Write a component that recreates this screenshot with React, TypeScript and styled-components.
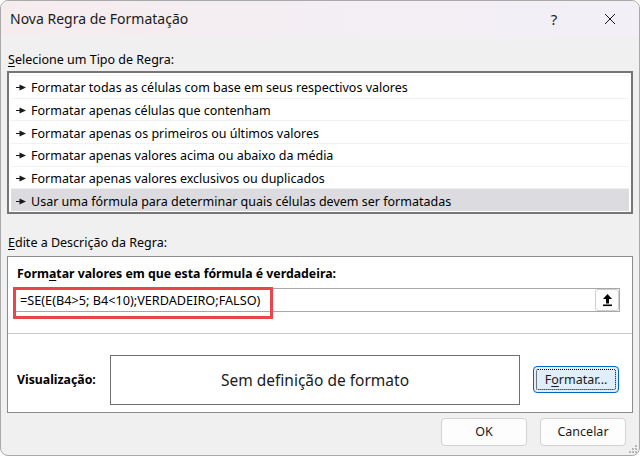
import React from 'react';
import styled, { createGlobalStyle } from 'styled-components';

const GlobalStyle = createGlobalStyle`
  html, body {
    margin: 0;
    padding: 0;
    background: #ffffff;
  }

  body {
    font-family: 'Noto Sans', 'Open Sans', sans-serif;
    font-size: 12.5px;
    color: #000;
  }
`;

const Dialog = styled.div`
  position: relative;
  box-sizing: border-box;
  width: 640px;
  height: 456px;
  display: flex;
  flex-direction: column;
  background: #f0f0f0;
  border: 1px solid #a9a9a9;
  border-radius: 8px;
  overflow: hidden;
`;

const TitleBar = styled.div`
  height: 35px;
  display: flex;
  align-items: center;
  padding-left: 9px;
  background: linear-gradient(90deg, #f5ecee 0%, #f3eef3 50%, #f2eff7 100%);
`;

const Title = styled.div`
  flex: 1;
  font-size: 14px;
  color: #1a1a1a;
  padding-bottom: 1px;
`;

const Controls = styled.div`
  display: flex;
  height: 100%;
  margin-right: 1px;
`;

const ControlButton = styled.div`
  width: 56px;
  height: 100%;
  display: flex;
  align-items: center;
  justify-content: center;
  font-size: 15px;
  color: #1a1a1a;
`;

const Body = styled.div`
  flex: 1;
  display: flex;
  flex-direction: column;
  padding: 0 6px;
`;

const Label = styled.div<{ $top: number }>`
  height: 18px;
  line-height: 18px;
  margin-top: ${(p) => p.$top}px;
  padding-left: 1px;
`;

const Key = styled.span`
  text-decoration: underline;
  text-underline-offset: 2px;
`;

const RuleList = styled.div`
  margin-top: 2px;
  border: 2px solid #767676;
  background: #ffffff;
  padding: 2px 2px 1px;
`;

const RuleRow = styled.div<{ $selected?: boolean }>`
  box-sizing: border-box;
  height: 22.66px;
  display: flex;
  align-items: center;
  padding: 2px 0 0 5px;
  gap: 5px;
  white-space: nowrap;
  background: ${(p) => (p.$selected ? '#dcdce0' : '#ffffff')};
  border-top: 1px solid ${(p) => (p.$selected ? '#eeeeee' : '#f2f2f2')};
`;

const DescBox = styled.div`
  margin-top: 4px;
  height: 157px;
  box-sizing: border-box;
  border: 1px solid #8c8c8c;
  background: #ffffff;
  display: flex;
  flex-direction: column;
`;

const DescHeader = styled.div`
  height: 18px;
  line-height: 18px;
  margin: 8px 0 0 9px;
  font-weight: 700;
  font-size: 12.3px;
`;

const FormulaRow = styled.div`
  position: relative;
  margin: 5px 12px 0 7px;
  height: 24px;
  box-sizing: border-box;
  border: 1px solid #a7a7a7;
  display: flex;
  align-items: center;
  padding-left: 4px;
`;

const FormulaText = styled.div`
  flex: 1;
  font-size: 12.7px;
  padding-top: 1px;
  white-space: nowrap;
`;

const CollapseButton = styled.div`
  width: 24px;
  height: 22px;
  box-sizing: border-box;
  border: 1px solid #cfcfcf;
  border-radius: 3px;
  background: #fdfdfd;
  display: flex;
  align-items: center;
  justify-content: center;
`;

const Highlight = styled.div`
  position: absolute;
  left: -3px;
  top: -2px;
  width: 260px;
  height: 32px;
  box-sizing: border-box;
  border: 3px solid #e8454d;
  pointer-events: none;
`;

const Divider = styled.div`
  margin-top: 21px;
  height: 1px;
  background: #c9c9c9;
`;

const PreviewRow = styled.div`
  margin: 21px 13px 0 9px;
  display: flex;
  align-items: center;
`;

const PreviewLabel = styled.div`
  width: 93px;
  font-weight: 700;
  font-size: 12.3px;
`;

const PreviewBox = styled.div`
  width: 411px;
  height: 50px;
  box-sizing: border-box;
  border: 1px solid #6f6f6f;
  display: flex;
  align-items: center;
  justify-content: center;
  font-size: 15.5px;
  color: #1a1a1a;
`;

const Footer = styled.div`
  margin-top: 5px;
  display: flex;
  justify-content: flex-end;
  gap: 13px;
  padding-right: 7px;
`;

const Button = styled.div<{ $focused?: boolean }>`
  width: 86px;
  height: ${(p) => (p.$focused ? 27 : 28)}px;
  box-sizing: border-box;
  border-radius: 4px;
  border: 1px solid ${(p) => (p.$focused ? '#0067c0' : '#d2d2d2')};
  background: ${(p) => (p.$focused ? '#e0eef9' : '#fdfdfd')};
  display: flex;
  align-items: center;
  justify-content: center;
  padding-bottom: 1px;
  color: #1a1a1a;
  position: relative;
`;

const FocusRing = styled.div`
  position: absolute;
  inset: 2px;
  border: 1px dotted #000;
  border-radius: 2px;
`;

const FormatButton = styled(Button)`
  margin-left: 13px;
`;

const Grip = styled.svg`
  position: absolute;
  right: 1px;
  bottom: 1px;
`;

function RuleArrow () {
  return (
    <svg width='10' height='7' viewBox='0 0 10 7'>
      <path d='M0 3h3.5V0.6L10 3.5 3.5 6.4V4H0z' fill='#1a1a1a' />
    </svg>
  );
}

const rules = [
  'Formatar todas as células com base em seus respectivos valores',
  'Formatar apenas células que contenham',
  'Formatar apenas os primeiros ou últimos valores',
  'Formatar apenas valores acima ou abaixo da média',
  'Formatar apenas valores exclusivos ou duplicados',
  'Usar uma fórmula para determinar quais células devem ser formatadas'
];

export default function App () {
  return (
    <>
      <GlobalStyle />
      <Dialog>
        <TitleBar>
          <Title>Nova Regra de Formatação</Title>
          <Controls>
            <ControlButton>?</ControlButton>
            <ControlButton>
              <svg width='12' height='12' viewBox='0 0 12 12'>
                <path d='M1 1l10 10M11 1L1 11' stroke='#1a1a1a' strokeWidth='1' />
              </svg>
            </ControlButton>
          </Controls>
        </TitleBar>
        <Body>
          <Label $top={15}><Key>S</Key>elecione um Tipo de Regra:</Label>
          <RuleList>
            {rules.map((rule, i) => (
              <RuleRow key={rule} $selected={i === rules.length - 1}>
                <RuleArrow />
                <span>{rule}</span>
              </RuleRow>
            ))}
          </RuleList>
          <Label $top={20}><Key>E</Key>dite a Descrição da Regra:</Label>
          <DescBox>
            <DescHeader>Form<Key>a</Key>tar valores em que esta fórmula é verdadeira:</DescHeader>
            <FormulaRow>
              <FormulaText>=SE(E(B4&gt;5; B4&lt;10);VERDADEIRO;FALSO)</FormulaText>
              <CollapseButton>
                <svg width='11' height='14' viewBox='0 0 11 14'>
                  <path d='M5.5 1L1 6h3v4.5h3V6h3z' fill='#000' />
                  <rect x='1' y='11.5' width='9' height='1.6' fill='#000' />
                </svg>
              </CollapseButton>
              <Highlight />
            </FormulaRow>
            <Divider />
            <PreviewRow>
              <PreviewLabel>Visualização:</PreviewLabel>
              <PreviewBox>Sem definição de formato</PreviewBox>
              <FormatButton $focused>
                <FocusRing />
                F<Key>o</Key>rmatar...
              </FormatButton>
            </PreviewRow>
          </DescBox>
          <Footer>
            <Button>OK</Button>
            <Button>Cancelar</Button>
          </Footer>
        </Body>
        <Grip width='12' height='12' viewBox='0 0 12 12'>
          {[[9, 3], [6, 6], [9, 6], [3, 9], [6, 9], [9, 9]].map(([x, y]) => (
            <rect key={`${x}-${y}`} x={x} y={y} width='2' height='2' fill='#b8b8b8' />
          ))}
        </Grip>
      </Dialog>
    </>
  );
}
